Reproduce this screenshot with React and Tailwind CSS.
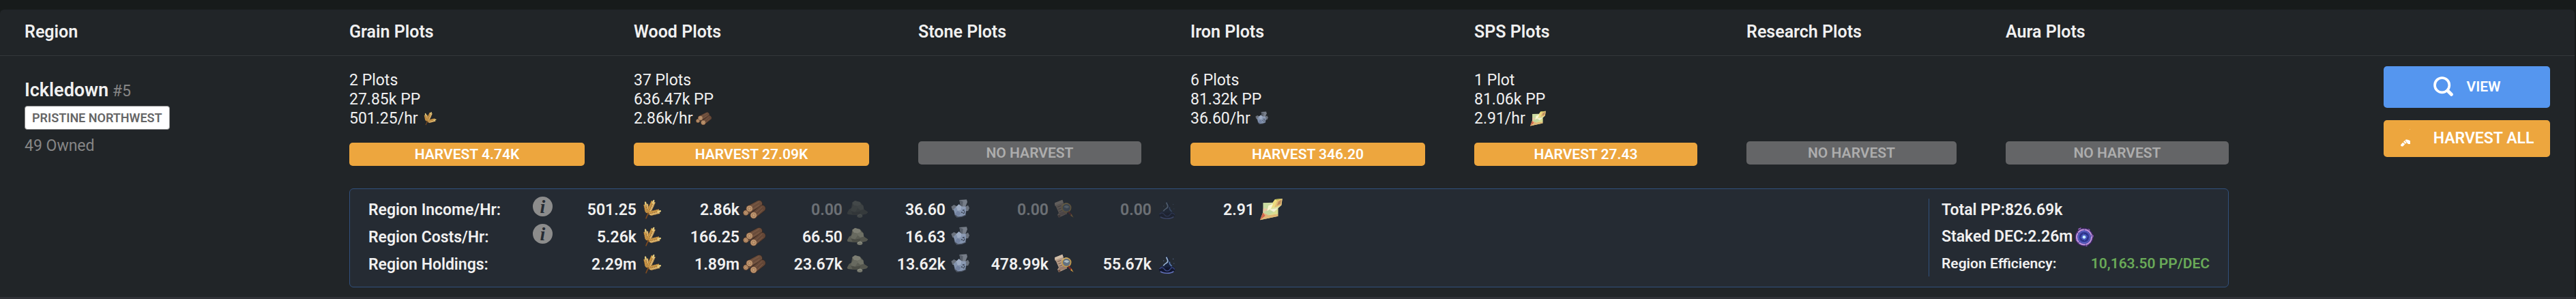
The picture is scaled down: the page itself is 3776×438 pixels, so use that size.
import React from "react";

const columns = [
  { name: "Grain", plots: "2 Plots", pp: "27.85k PP", rate: "501.25/hr", icon: "grain", harvest: "4.74K" },
  { name: "Wood", plots: "37 Plots", pp: "636.47k PP", rate: "2.86k/hr", icon: "wood", harvest: "27.09K" },
  { name: "Stone" },
  { name: "Iron", plots: "6 Plots", pp: "81.32k PP", rate: "36.60/hr", icon: "iron", harvest: "346.20" },
  { name: "SPS", plots: "1 Plot", pp: "81.06k PP", rate: "2.91/hr", icon: "sps", harvest: "27.43" },
  { name: "Research" },
  { name: "Aura" },
];

const resources = ["grain", "wood", "stone", "iron", "research", "aura", "sps"];

const summary = [
  { label: "Region Income/Hr:", info: true, values: ["501.25", "2.86k", "0.00", "36.60", "0.00", "0.00", "2.91"] },
  { label: "Region Costs/Hr:", info: true, values: ["5.26k", "166.25", "66.50", "16.63", null, null, null] },
  { label: "Region Holdings:", info: false, values: ["2.29m", "1.89m", "23.67k", "13.62k", "478.99k", "55.67k", null] },
];

// One ear of grain growing upwards from 0,0
const Ear = ({ x, y, angle, length }) => {
  const rows = [];
  for (let d = 8; d < length - 10; d += 8) rows.push(d);
  return (
    <g transform={`translate(${x} ${y}) rotate(${angle})`}>
      <path d={`M0 6V${-length}`} stroke="#8a5a26" strokeWidth="3" />
      {rows.map((d) => (
        <g key={d}>
          <ellipse cx="-5" cy={-d} rx="4" ry="8" transform={`rotate(-24 -5 ${-d})`} fill="#d3a04c" stroke="#96632b" strokeWidth="1" />
          <ellipse cx="5" cy={-d} rx="4" ry="8" transform={`rotate(24 5 ${-d})`} fill="#e6c077" stroke="#96632b" strokeWidth="1" />
        </g>
      ))}
      <ellipse cx="0" cy={8 - length} rx="4" ry="9" fill="#e6cf82" />
    </g>
  );
};

const GrainArt = () => (
  <>
    <path d="M27 89C30 80 34 72 42 64" stroke="#7d4a20" strokeWidth="5" fill="none" strokeLinecap="round" />
    <Ear x={34} y={66} angle={-12} length={50} />
    <Ear x={37} y={66} angle={24} length={62} />
    <Ear x={40} y={70} angle={76} length={54} />
  </>
);

const Log = ({ x, y, dx, dy, r, side }) => (
  <g>
    <path d={`M${x} ${y}L${x + dx} ${y + dy}`} stroke="#3b2a22" strokeWidth={r * 2 + 2} strokeLinecap="round" />
    <path d={`M${x} ${y}L${x + dx} ${y + dy}`} stroke={side} strokeWidth={r * 2 - 1} strokeLinecap="round" />
    <path d={`M${x + 4} ${y - 8}l${dx - 4} ${dy}M${x + 10} ${y + 5}l${dx - 8} ${dy}`} stroke="#8a6750" strokeWidth="2" />
    <circle cx={x} cy={y} r={r} fill="#c29a73" stroke="#6f4a33" strokeWidth="2" />
    <circle cx={x} cy={y} r={r / 2} fill="none" stroke="#8d6546" strokeWidth="2" />
  </g>
);

const WoodArt = () => (
  <>
    <Log x={13} y={65} dx={50} dy={-32} r={11} side="#5e4334" />
    <Log x={29} y={47} dx={42} dy={-22} r={14} side="#6b4d3b" />
    <Log x={47} y={76} dx={38} dy={-30} r={14} side="#644737" />
  </>
);

const StoneArt = () => (
  <>
    <path d="M5 66L14 50L24 44L28 20L40 12L62 18L76 34L79 50L97 62L90 70L66 76L30 74L8 72Z" fill="#5b5d54" />
    <path d="M28 20L40 12L62 18L66 30L50 36L34 32Z" fill="#7d7e73" />
    <path d="M66 30L76 34L79 50L64 54L52 44L50 36Z" fill="#6e7065" />
    <path d="M34 32L50 36L52 44L40 62L22 58L24 44Z" fill="#686a60" />
    <path d="M22 58L40 62L66 58L60 74L30 74Z" fill="#4a4c45" />
    <path d="M64 54L79 50L97 62L90 70L66 70Z" fill="#54564e" />
    <ellipse cx="61" cy="79" rx="12" ry="8" fill="#77796e" />
    <path d="M52 78L62 72L70 77" fill="none" stroke="#999b8e" strokeWidth="3" />
  </>
);

const IronArt = () => (
  <>
    <path d="M24 74L34 86L58 84L76 76L70 66L28 64Z" fill="#4a5261" />
    <path d="M46 9L78 7L81 18L72 40L52 38Z" fill="#767d88" />
    <path d="M46 9L62 16L60 36L52 36Z" fill="#575e69" />
    <path d="M10 38L22 30L34 36L34 54L16 54Z" fill="#6b727d" />
    <path d="M72 38L84 32L90 44L84 58L70 56Z" fill="#6b727d" />
    <path d="M20 50L32 38L44 28L56 38L74 38L76 58L72 74L56 80L40 82L26 72Z" fill="#8393ad" />
    <path d="M32 38L44 28L56 38L52 54L38 56Z" fill="#9dabc2" />
    <path d="M26 72L38 56L52 66L44 80Z" fill="#7382a0" />
    <path d="M56 38L74 38L70 48L58 50Z" fill="#8d9bb4" />
    <path d="M60 54l8 0M54 62l6 3M62 68l6-2M66 60l5 2" stroke="#343b49" strokeWidth="4" />
  </>
);

const ResearchArt = () => (
  <>
    <path d="M12 22L46 8L50 20L66 70L30 86L24 74L30 66L18 38L13 34Z" fill="#b39a86" />
    <path d="M12 22L46 8L50 20L22 30L14 32Z" fill="#d0bda8" />
    <path d="M30 66L62 56L66 70L36 78Z" fill="#96796a" />
    <path d="M24 40l16-6M28 50l12-5M32 60l14-5" stroke="#6d5446" strokeWidth="3" />
    <path d="M26 76l10-2 2 10-8 2z" fill="#6d5044" />
    <circle cx="64" cy="43" r="19" fill="#627080" stroke="#c29849" strokeWidth="5" />
    <path d="M52 40C58 30 70 32 76 40L66 46Z" fill="#a9b8bf" />
    <path d="M46 34A20 20 0 0 1 70 25" fill="none" stroke="#e5c374" strokeWidth="3" />
    <path d="M74 62L86 76" stroke="#7c2927" strokeWidth="7" strokeLinecap="round" />
    <path d="M85 70L95 86L82 78Z" fill="#c9963f" />
  </>
);

const AuraArt = () => (
  <>
    <ellipse cx="53" cy="74" rx="35" ry="17" fill="#12172f" />
    <path d="M20 72C26 62 38 66 42 74S60 84 66 74S82 64 86 74" fill="none" stroke="#3c4a86" strokeWidth="4" />
    <path d="M24 83C36 93 70 94 82 82" fill="none" stroke="#6170b8" strokeWidth="5" />
    <path d="M30 62C40 58 66 58 76 64" fill="none" stroke="#33407a" strokeWidth="4" />
    <path d="M32 66C36 48 58 48 54 34C52 26 48 22 50 10C54 22 66 26 66 40C66 48 76 54 76 64Z" fill="#18233f" />
    <path d="M37 58C44 44 60 48 56 34L50 20" fill="none" stroke="#9db8d8" strokeWidth="5" />
    <path d="M64 40C62 52 68 54 74 60" fill="none" stroke="#5877ab" strokeWidth="5" />
    <path d="M78 28h4M36 36h4M82 48h3" stroke="#5c7099" strokeWidth="3" />
  </>
);

const SpsArt = () => (
  <>
    <path d="M23 22L65 20L75 6L107 3L103 32L88 46L88 80L9 97L22 62Z" fill="#dbe0a2" />
    <path d="M23 22L60 24L48 50L24 44Z" fill="#c9dba0" />
    <path d="M24 44L48 50L22 64Z" fill="#e8c7a4" />
    <path d="M48 50L88 46L70 62Z" fill="#f3f0d4" />
    <path d="M48 50L70 62L46 76L22 64Z" fill="#c3d89f" />
    <path d="M22 64L34 78L9 97Z" fill="#d2674b" />
    <path d="M22 64L46 76L34 82Z" fill="#e2b07c" />
    <path d="M46 76L88 70L88 80L9 97L34 80Z" fill="#dfb674" />
    <path d="M70 62L88 46L88 70L46 76Z" fill="#d8dd8f" />
    <path d="M65 20L75 6L84 12L72 38L58 46L66 26Z" fill="#eedb7c" />
    <path d="M75 6L107 3L84 12Z" fill="#c4bb4c" />
    <path d="M84 12L107 3L103 32L72 42Z" fill="#e2bb73" />
    <path d="M90 16L103 8L99 26L84 32Z" fill="#b9895f" />
    <path d="M66 26L58 46L40 58L46 34Z" fill="#fbf6cf" />
  </>
);

const art = {
  grain: GrainArt,
  wood: WoodArt,
  stone: StoneArt,
  iron: IronArt,
  research: ResearchArt,
  aura: AuraArt,
  sps: SpsArt,
};

const ResourceIcon = ({ type, className }) => {
  const Art = art[type];
  return (
    <svg viewBox="0 0 108 108" className={className} role="img" aria-label={type}>
      <Art />
    </svg>
  );
};

const DecIcon = () => (
  <svg viewBox="0 0 90 90" className="h-[30px] w-[30px]" role="img" aria-label="DEC">
    <circle cx="45" cy="46" r="41" fill="#3a2560" />
    <circle cx="45" cy="46" r="33" fill="#3f43a8" stroke="#b98fd6" strokeWidth="7" strokeDasharray="44 2 30 2" />
    <circle cx="45" cy="46" r="25" fill="#333a97" stroke="#6c72d0" strokeWidth="3" />
    <circle cx="45" cy="46" r="16" fill="#4656bd" stroke="#22276b" strokeWidth="3" strokeDasharray="20 4" />
    <circle cx="45" cy="46" r="7" fill="#c8f0ff" />
    <path d="M18 10L32 3L30 10L20 14ZM62 8l9 5-3 6zM80 34l7 6-4 10zM50 84l8-2 0 6z" fill="#9160b8" />
    <path d="M8 50l6 8-4 6z" fill="#9160b8" />
  </svg>
);

const SearchIcon = () => (
  <svg viewBox="0 0 87 87" className="h-[29px] w-[29px]" fill="none" stroke="currentColor" strokeLinecap="round">
    <circle cx="38" cy="38" r="32" strokeWidth="11" />
    <path d="M63 63L79 79" strokeWidth="15" />
  </svg>
);

const HandIcon = () => (
  <svg viewBox="0 0 87 87" className="h-[29px] w-[29px]" fill="currentColor">
    <path d="M3 70L12 59L22 66L14 75C9 79 3 76 3 70Z" />
    <path d="M15 56L20 51L29 61L24 65Z" />
    <path d="M22 49L28 46L37 48L45 52V66H36L30 60Z" />
    <path d="M43 0h2v2h-2z" opacity="0.7" />
  </svg>
);

const PlotCell = ({ column }) => (
  <td className="px-9 pt-[22px] pb-[33px] align-top">
    {column.harvest ? (
      <>
        <p>{column.plots}</p>
        <p>{column.pp}</p>
        <p className="flex h-7 items-center gap-[5px]">
          {column.rate}
          <ResourceIcon type={column.icon} className="h-[25px] w-[25px]" />
        </p>
        <button type="button" className="mt-[21px] block h-[34px] w-full rounded-[5px] bg-[#eda63e] text-[21px] font-semibold text-white">
          HARVEST {column.harvest}
        </button>
      </>
    ) : (
      <>
        <div className="h-[82px]"></div>
        <button type="button" disabled className="mt-[21px] block h-[34px] w-full rounded-[5px] bg-[#646567] text-[21px] font-semibold text-[#adadad]">
          NO HARVEST
        </button>
      </>
    )}
  </td>
);

const SummaryTable = () => (
  <table className="table-fixed border-separate border-spacing-0 font-semibold">
    <colgroup>
      <col className="w-[241px]" />
      <col className="w-[42px]" />
      {resources.map((r) => (
        <col key={r} className="w-[151px]" />
      ))}
    </colgroup>
    <tbody>
      {summary.map((row) => (
        <tr key={row.label} className="h-10">
          <th scope="row" className="p-0 text-left font-semibold">{row.label}</th>
          <td className="p-0 align-top">
            {row.info && (
              <button
                type="button"
                aria-label={`About ${row.label}`}
                className="flex h-[29px] w-[29px] items-center justify-center rounded-full bg-[#8c8c8c] font-['Liberation_Serif',serif] text-[28px] font-bold text-[#252b33] italic"
              >
                i
              </button>
            )}
          </td>
          {row.values.map((value, i) => (
            <td key={resources[i]} className="p-0">
              {value && (
                <div className={`flex items-center justify-end gap-[5px] ${value === "0.00" ? "opacity-35" : ""}`}>
                  {value}
                  <ResourceIcon type={resources[i]} className="h-9 w-9" />
                </div>
              )}
            </td>
          ))}
        </tr>
      ))}
    </tbody>
  </table>
);

const App = () => {
  return (
    <div className="bg-[#171b1b] pt-[14px] font-[Roboto,sans-serif] text-[23px] leading-7 text-[#f0f0f0]">
      <div className="mr-[2px] rounded-t-[6px] bg-[#212528]">
        <table className="w-full table-fixed border-separate border-spacing-0">
          <colgroup>
            <col className="w-[476px]" />
            <col className="w-[417px]" />
            <col className="w-[417px]" />
            <col className="w-[399px]" />
            <col className="w-[416px]" />
            <col className="w-[399px]" />
            <col className="w-[380px]" />
            <col className="w-[399px]" />
            <col className="w-[471px]" />
          </colgroup>
          <thead>
            <tr className="h-[68px] text-left text-[25px]">
              <th scope="col" className="border-b border-[#33373b] px-9 pt-0 pb-[2px] font-semibold">Region</th>
              {columns.map((column) => (
                <th key={column.name} scope="col" className="border-b border-[#33373b] px-9 pt-0 pb-[2px] font-semibold">
                  {column.name} Plots
                </th>
              ))}
              <td className="border-b border-[#33373b]"></td>
            </tr>
          </thead>
          <tbody>
            <tr>
              <td rowSpan={2} className="px-9 pt-[34px] pb-0 align-top text-[#868686]">
                <div className="leading-8">
                  <span className="text-[27px] font-semibold text-[#f0f0f0]">Ickledown</span> #5
                </div>
                <div className="mt-[5px] flex">
                  <span className="flex h-[35px] items-center rounded-[4px] border border-[#8a8a8a] bg-white px-[10px] text-[18px] font-semibold text-[#666666]">
                    PRISTINE NORTHWEST
                  </span>
                </div>
                <p className="mt-[10px]">49 Owned</p>
              </td>
              {columns.map((column) => (
                <PlotCell key={column.name} column={column} />
              ))}
              <td rowSpan={2} className="pt-[15px] pr-9 pb-0 pl-[191px] align-top font-semibold text-white">
                <button type="button" className="flex h-[61px] w-full items-center justify-center gap-5 rounded-[5px] bg-[#5596ef] pb-[2px] text-[21px]">
                  <SearchIcon />
                  VIEW
                </button>
                <button type="button" className="mt-[18px] flex h-[54px] w-full items-center justify-center gap-5 rounded-[5px] bg-[#eda63e] whitespace-nowrap">
                  <HandIcon />
                  HARVEST ALL
                </button>
              </td>
            </tr>
            <tr>
              <td colSpan={7} className="px-9 pt-0 pb-[14px] align-top">
                <div className="flex justify-between rounded-[6px] border border-[#31507c] bg-[#252b33] pt-[11px] pr-[27px] pb-3 pl-[27px]">
                  <SummaryTable />
                  <div className="my-[3px] w-[412px] border-l border-[#31507c] pl-[18px] font-semibold">
                    <div className="-mt-[3px] flex h-[39px] items-center">Total PP:826.69k</div>
                    <div className="flex h-[39px] items-center gap-[2px]">
                      Staked DEC:2.26m
                      <DecIcon />
                    </div>
                    <div className="flex h-[39px] items-center justify-between text-[21px]">
                      <span>Region Efficiency:</span>
                      <span className="font-semibold text-[#69a958]">10,163.50 PP/DEC</span>
                    </div>
                  </div>
                </div>
              </td>
            </tr>
          </tbody>
        </table>
      </div>
      <div className="h-[3px] bg-[#303237]"></div>
    </div>
  );
};

export default App;
